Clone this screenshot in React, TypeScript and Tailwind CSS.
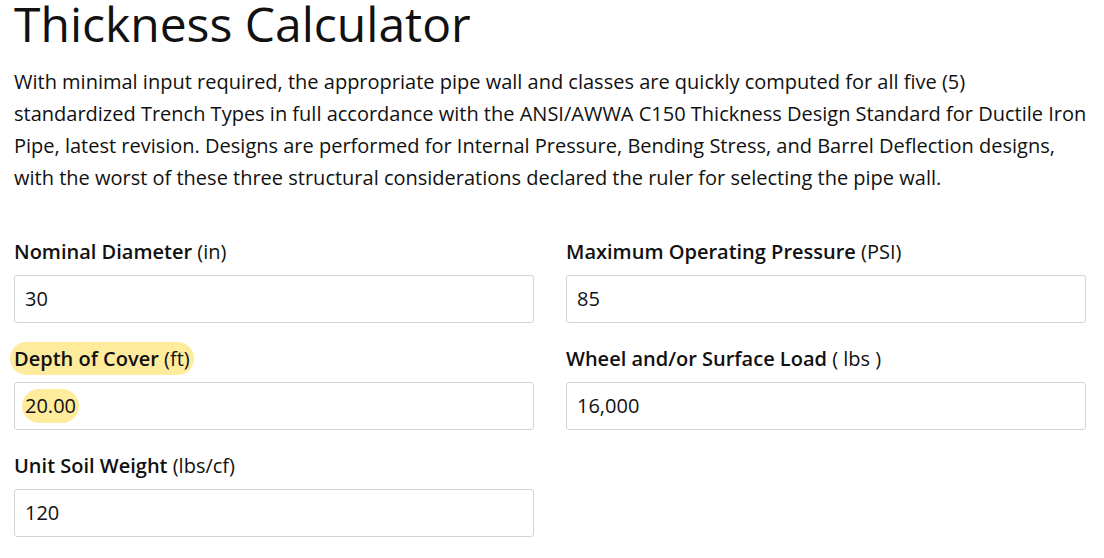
import React from 'react'

type Field = {
  label: string
  unit: string
  value: string
  highlight?: boolean
}

const fields: (Field | null)[] = [
  { label: 'Nominal Diameter', unit: '(in)', value: '30' },
  { label: 'Maximum Operating Pressure', unit: '(PSI)', value: '85' },
  { label: 'Depth of Cover', unit: '(ft)', value: '20.00', highlight: true },
  { label: 'Wheel and/or Surface Load', unit: '( lbs )', value: '16,000' },
  { label: 'Unit Soil Weight', unit: '(lbs/cf)', value: '120' },
  null,
]

function FieldBox({ field }: { field: Field }) {
  return (
    <div className="flex flex-col">
      <label className="text-[20px] leading-[30px] text-[#111]">
        <span className={field.highlight ? 'bg-[#feeb9c] rounded-full px-[4px] -mx-[4px] py-[3px]' : ''}>
          <span className="font-semibold">{field.label}</span> {field.unit}
        </span>
      </label>
      <div className="mt-[8px] h-[48px] border border-[#d4d4d4] rounded-[3px] bg-white flex items-center px-[10px]">
        <span
          className={
            'text-[20px] text-[#111] ' +
            (field.highlight ? 'bg-[#feeb9c] rounded-full px-[3px] -mx-[3px] py-[2px]' : '')
          }
        >
          {field.value}
        </span>
      </div>
    </div>
  )
}

export default function App() {
  return (
    <div className="w-[1104px] h-[558px] overflow-hidden bg-white pl-[14px] pr-[14px] font-['Open_Sans',sans-serif] text-[#111]">
      <h1 className="text-[48px] leading-[48px] font-normal text-[#111]">Thickness Calculator</h1>
      <p className="mt-[18px] text-[20px] leading-[32px]">
        With minimal input required, the appropriate pipe wall and classes are quickly computed for all five (5)
        standardized Trench Types in full accordance with the ANSI/AWWA C150 Thickness Design Standard for Ductile Iron
        Pipe, latest revision. Designs are performed for Internal Pressure, Bending Stress, and Barrel Deflection designs,
        with the worst of these three structural considerations declared the ruler for selecting the pipe wall.
      </p>
      <div className="mt-[43px] grid grid-cols-[520px_520px] gap-x-[32px] gap-y-[21px]">
        {fields.map((f, i) => (f ? <FieldBox key={i} field={f} /> : <div key={i} />))}
      </div>
    </div>
  )
}
